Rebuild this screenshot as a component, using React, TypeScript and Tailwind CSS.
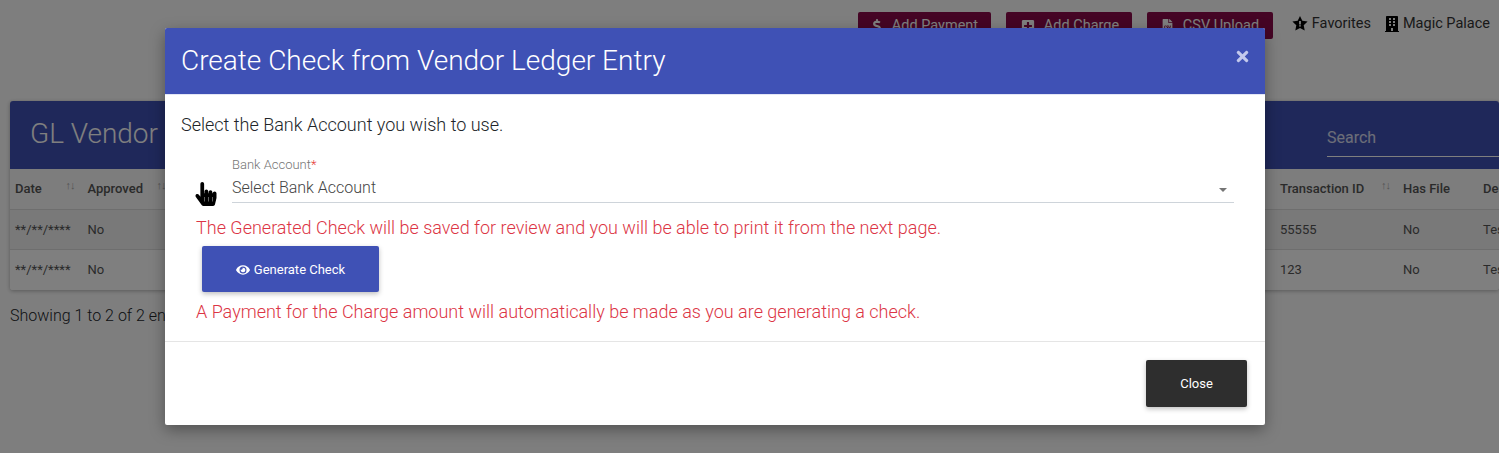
import { FaBuilding, FaDollarSign, FaEye, FaFileCsv, FaHandPointer, FaPlusSquare, FaTimes } from 'react-icons/fa';

const rows = [
  { date: '**/**/****', approved: 'No', id: '55555', file: 'No', desc: 'Test' },
  { date: '**/**/****', approved: 'No', id: '123', file: 'No', desc: 'Test' },
];

function ToolbarButton({ icon, label, className }: { icon: React.ReactNode; label: string; className: string }) {
  return (
    <div className={`flex h-[27px] items-center rounded-[2px] bg-[#8a0a4a] text-[14.5px] text-white ${className}`}>
      {icon}
      <span>{label}</span>
    </div>
  );
}

function SortIcon({ right }: { right: string }) {
  return <span className={`ml-auto -translate-y-[4px] text-[11px] leading-none tracking-[-1px] text-[#aaa] ${right}`}>↑↓</span>;
}

// star with the small cut-out in the middle
function StarIcon() {
  return (
    <svg width="16" height="15" viewBox="0 0 16 15" className="text-black">
      <path
        fillRule="evenodd"
        fill="currentColor"
        d="M8 0l2.3 4.8 5.3.7-3.9 3.7 1 5.3L8 12l-4.7 2.5 1-5.3L.4 5.5l5.3-.7L8 0zM7.1 5v3.4h1.8V5H7.1zm0 4.2v1.4h1.8V9.2H7.1z"
      />
    </svg>
  );
}

function Background() {
  return (
    <div className="h-[453px] w-[1499px] overflow-hidden bg-[#fdfdfd] font-['Roboto',sans-serif] text-[#212529]">
      <div className="flex h-[101px] justify-end pt-[12px]">
        <div className="flex gap-[15px]">
          <ToolbarButton icon={<FaDollarSign size={14} />} label="Add Payment" className="w-[133px] gap-[8px] pl-[12px]" />
          <ToolbarButton icon={<FaPlusSquare size={14} />} label="Add Charge" className="w-[126px] gap-[9px] pl-[15px]" />
          <ToolbarButton icon={<FaFileCsv size={13} />} label="CSV Upload" className="w-[126px] gap-[9px] pl-[14px]" />
        </div>
        <div className="ml-[19px] flex h-[23px] items-center gap-[4px] text-[14.5px] text-[#333]">
          <StarIcon />
          <span>Favorites</span>
        </div>
        <div className="ml-[13px] mr-[9px] flex h-[23px] items-center gap-[3px] text-[14.5px] text-[#333]">
          <FaBuilding size={16} className="text-black" />
          <span>Magic Palace</span>
        </div>
      </div>

      <div className="ml-[10px] overflow-hidden rounded-[3px] bg-white shadow-[0_1px_4px_rgba(0,0,0,0.3)]">
        <div className="flex h-[68px] items-start justify-between bg-[#3f51b5]">
          <h2 className="pl-[20px] pt-[16px] text-[28px] font-light leading-[34px] text-white">GL Vendor Ledger</h2>
          <div className="mt-[22px] h-[34px] w-[172px] border-b border-white text-[16px] leading-[30px] text-white/80">
            Search
          </div>
        </div>

        <div className="flex h-[41px] items-center border-b border-[#ddd] bg-[#fafafa] pl-[5px] text-[13px] font-medium text-[#555]">
          <div className="flex w-[72.5px] shrink-0 items-center">
            <span>Date</span>
            <SortIcon right="mr-[13px]" />
          </div>
          <div className="flex w-[80px] shrink-0 items-center">
            <span>Approved</span>
            <SortIcon right="mr-[2px]" />
          </div>
          <div className="w-[1112.5px] shrink-0" />
          <div className="flex w-[123px] shrink-0 items-center">
            <span>Transaction ID</span>
            <SortIcon right="mr-[13px]" />
          </div>
          <div className="w-[80px] shrink-0">Has File</div>
          <div className="shrink-0">Description</div>
        </div>

        {rows.map((row, i) => (
          <div
            key={row.id}
            className={`flex h-[40px] items-center pl-[5px] text-[13px] text-[#555] ${i === 0 ? 'border-b border-[#ddd] bg-[#f2f2f2]' : 'bg-[#fff]'}`}
          >
            <div className="w-[72.5px] shrink-0">{row.date}</div>
            <div className="w-[80px] shrink-0">{row.approved}</div>
            <div className="w-[1112.5px] shrink-0" />
            <div className="w-[123px] shrink-0">{row.id}</div>
            <div className="w-[80px] shrink-0">{row.file}</div>
            <div className="shrink-0">{row.desc}</div>
          </div>
        ))}
      </div>

      <div className="ml-[10px] mt-[16px] text-[16px] font-light leading-[20px] text-[#212529]">Showing 1 to 2 of 2 entries</div>
    </div>
  );
}

function Modal() {
  return (
    <div className="absolute left-[165px] top-[28px] h-[397px] w-[1100px] rounded-[2px] bg-white font-['Roboto',sans-serif] shadow-[0_5px_15px_rgba(0,0,0,0.35)]">
      <div className="relative h-[67px] rounded-t-[2px] border-b border-[#e3e6f5] bg-[#3f51b5] pl-[16px] pt-[15px]">
        <h4 className="text-[28px] font-light leading-[36px] text-white">Create Check from Vendor Ledger Entry</h4>
        <FaTimes size={17} className="absolute right-[14px] top-[20px] text-[#c3c9ec]" />
      </div>

      <div className="h-[247px] border-b border-[#e5e5e5] pl-[16px] pt-[19px]">
        <p className="text-[18px] font-light leading-[22px] text-[#212529]">Select the Bank Account you wish to use.</p>

        <div className="mt-[21px] flex pl-[16px]">
          <FaHandPointer size={24} className="-ml-[3px] mt-[25px] text-black" />
          <div className="relative ml-[14px] h-[46px] w-[1002px] border-b border-[#ced4da]">
            <label className="block text-[13px] font-light leading-[16px] text-[#757575]">
              Bank Account<span className="text-[#e53935]">*</span>
            </label>
            <div className="pt-[3px] text-[16px] font-light leading-[24px] text-[#444]">Select Bank Account</div>
            <span className="absolute right-[7px] top-[31px] h-0 w-0 border-x-[4px] border-t-[4px] border-x-transparent border-t-[#757575]" />
          </div>
        </div>

        <p className="ml-[15px] mt-[10px] text-[18px] font-light leading-[24px] text-[#dc3545]">
          The Generated Check will be saved for review and you will be able to print it from the next page.
        </p>
        <button className="ml-[21px] mt-[6px] flex h-[46px] w-[177px] items-center justify-center gap-[4px] rounded-[2px] bg-[#3f51b5] pt-px text-[13px] text-white shadow-[0_2px_5px_rgba(0,0,0,0.25)]">
          <FaEye size={14} />
          <span>Generate Check</span>
        </button>
        <p className="ml-[15px] mt-[8px] text-[18px] font-light leading-[24px] text-[#dc3545]">
          A Payment for the Charge amount will automatically be made as you are generating a check.
        </p>
      </div>

      <div className="flex justify-end pr-[18px] pt-[18px]">
        <button className="h-[47px] w-[101px] rounded-[2px] bg-[#2e2e2e] pt-px text-[13px] text-white shadow-[0_2px_5px_rgba(0,0,0,0.25)]">
          Close
        </button>
      </div>
    </div>
  );
}

export default function App() {
  return (
    <div className="relative h-[453px] w-[1499px] overflow-hidden">
      <Background />
      <div className="absolute inset-0 bg-black/50" />
      <Modal />
    </div>
  );
}
